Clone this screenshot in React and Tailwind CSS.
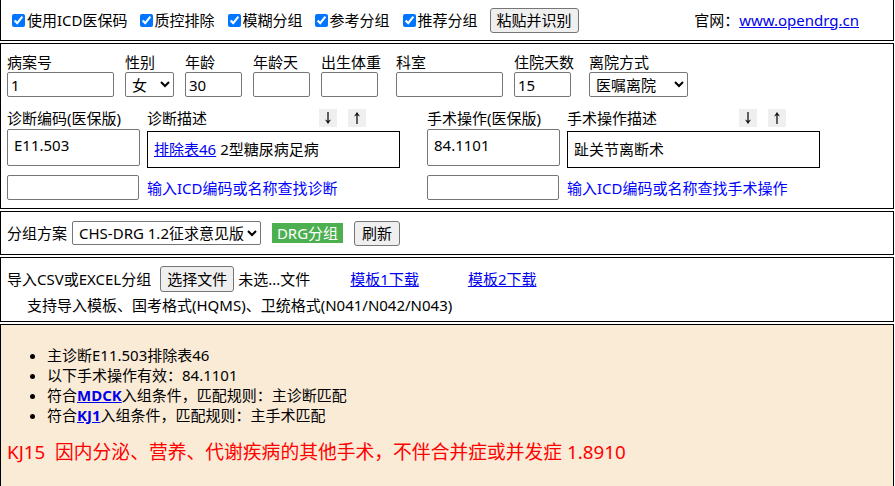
import React from "react";

function Check({ label, className = "" }) {
  return (
    <label className={"flex items-center " + className}>
      <input type="checkbox" defaultChecked className="w-[13px] h-[13px] mr-[2px] accent-[#0075ff]" />
      <span>{label}</span>
    </label>
  );
}

function Field({ label, w, children }) {
  return (
    <div className="flex flex-col shrink-0" style={{ width: w }}>
      <div className="h-[20px] leading-[20px] whitespace-nowrap">{label}</div>
      {children}
    </div>
  );
}

const inputCls =
  "h-[25px] border border-[#767676] rounded-[2px] bg-white px-[3px] leading-[23px] outline-none";

function Arrow({ up }) {
  return (
    <div className="w-[18px] h-[18px] bg-[#efefef] flex items-center justify-center">
      <svg width="10" height="14" viewBox="0 0 10 14" className={up ? "rotate-180" : ""}>
        <line x1="5" y1="1" x2="5" y2="11" stroke="#111" strokeWidth="1.3" />
        <path d="M2 8.5 L5 13 L8 8.5 L5 10 Z" fill="#111" />
      </svg>
    </div>
  );
}

function CodeGroup({ codeLabel, descLabel, code, desc, search }) {
  return (
    <div className="w-[420px] shrink-0 flex flex-col">
      <div className="flex">
        <div className="w-[140px] flex flex-col">
          <div className="h-[20px] leading-[20px] whitespace-nowrap">{codeLabel}</div>
          <div className="mt-[1px] w-[133px] h-[37px] border border-[#767676] rounded-[2px] bg-white pl-[6px] pt-[5px] leading-[20px]">
            {code}
          </div>
        </div>
        <div className="w-[253px] flex flex-col">
          <div className="h-[20px] flex items-center relative">
            <span className="leading-[20px]">{descLabel}</span>
            <div className="flex ml-auto mr-[34px] gap-[11px]">
              <Arrow />
              <Arrow up />
            </div>
          </div>
          <div className="mt-[3px] w-[253px] h-[37px] border border-black flex items-center pl-[6px]">
            {desc}
          </div>
        </div>
      </div>
      <div className="flex items-center mt-[7px]">
        <div className="w-[132px] h-[25px] border border-[#767676] rounded-[2px] bg-white" />
        <span className="ml-[8px] text-[#0000ff] leading-[20px]">{search}</span>
      </div>
    </div>
  );
}

export default function App() {
  return (
    <div className="w-[894px] text-[15px] text-black bg-white font-['Segoe_UI','Noto_Sans','Noto_Sans_CJK_SC',sans-serif]">
      {/* top bar */}
      <div className="h-[41px] border-x border-b border-black flex items-center pl-[11px]">
        <Check label="使用ICD医保码" />
        <Check label="质控排除" className="ml-[12px]" />
        <Check label="模糊分组" className="ml-[13px]" />
        <Check label="参考分组" className="ml-[12px]" />
        <Check label="推荐分组" className="ml-[13px]" />
        <button className="ml-[12px] h-[25px] px-[6px] border border-[#767676] rounded-[3px] bg-[#efefef] leading-[23px]">
          粘贴并识别
        </button>
        <div className="ml-auto mr-[34px]">
          官网：<a href="#" className="text-[#0000ee] underline">www.opendrg.cn</a>
        </div>
      </div>

      {/* patient info */}
      <div className="mt-[2px] h-[166px] border border-black pl-[6px] pt-[8px]">
        <div className="flex">
          <Field label="病案号" w={118}>
            <input className={inputCls + " w-[107px]"} defaultValue="1" />
          </Field>
          <Field label="性别" w={60}>
            <select className="w-[49px] h-[25px] border border-[#767676] rounded-[2px] bg-white pl-[2px]" defaultValue="女">
              <option>男</option>
              <option>女</option>
            </select>
          </Field>
          <Field label="年龄" w={68}>
            <input className={inputCls + " w-[57px]"} defaultValue="30" />
          </Field>
          <Field label="年龄天" w={68}>
            <input className={inputCls + " w-[57px]"} />
          </Field>
          <Field label="出生体重" w={75}>
            <input className={inputCls + " w-[57px]"} />
          </Field>
          <Field label="科室" w={118}>
            <input className={inputCls + " w-[107px]"} />
          </Field>
          <Field label="住院天数" w={75}>
            <input className={inputCls + " w-[57px]"} defaultValue="15" />
          </Field>
          <Field label="离院方式" w={120}>
            <select className="w-[99px] h-[25px] border border-[#767676] rounded-[2px] bg-white pl-[2px]" defaultValue="医嘱离院">
              <option>医嘱离院</option>
              <option>医嘱转院</option>
            </select>
          </Field>
        </div>
        <div className="flex mt-[11px]">
          <CodeGroup
            codeLabel="诊断编码(医保版)"
            descLabel="诊断描述"
            code="E11.503"
            desc={
              <>
                <a href="#" className="text-[#0000ee] underline">排除表46</a>
                <span className="ml-[4px]">2型糖尿病足病</span>
              </>
            }
            search="输入ICD编码或名称查找诊断"
          />
          <CodeGroup
            codeLabel="手术操作(医保版)"
            descLabel="手术操作描述"
            code="84.1101"
            desc={<span>趾关节离断术</span>}
            search="输入ICD编码或名称查找手术操作"
          />
        </div>
      </div>

      {/* group scheme */}
      <div className="mt-[2px] h-[44px] border border-black pl-[6px] flex items-center">
        <span>分组方案</span>
        <select className="ml-[5px] w-[189px] h-[24px] border border-[#767676] rounded-[2px] bg-white pl-[2px]" defaultValue="a">
          <option value="a">CHS-DRG 1.2征求意见版</option>
        </select>
        <div className="ml-[11px] w-[71px] h-[20px] bg-[#4caf50] text-white flex items-center justify-center leading-none">
          DRG分组
        </div>
        <button className="ml-[11px] h-[25px] w-[46px] border border-[#767676] rounded-[3px] bg-[#efefef] leading-[23px]">
          刷新
        </button>
      </div>

      {/* import */}
      <div className="mt-[2px] h-[65px] border border-black pl-[6px] pt-[8px]">
        <div className="flex items-center h-[26px]">
          <span>导入CSV或EXCEL分组</span>
          <button className="ml-[9px] h-[26px] w-[74px] border border-[#767676] rounded-[3px] bg-[#efefef] leading-[24px]">
            选择文件
          </button>
          <span className="ml-[4px]">未选...文件</span>
          <a href="#" className="ml-[40px] text-[#0000ee] underline">模板1下载</a>
          <a href="#" className="ml-[49px] text-[#0000ee] underline">模板2下载</a>
        </div>
        <div className="pl-[20px] leading-[20px] mt-[3px]">支持导入模板、国考格式(HQMS)、卫统格式(N041/N042/N043)</div>
      </div>

      {/* result */}
      <div className="mt-[2px] h-[200px] border border-black bg-[#faebd7] pl-[6px] pt-[20px]">
        <ul className="list-disc pl-[40px] leading-[20px]">
          <li>主诊断E11.503排除表46</li>
          <li>以下手术操作有效：84.1101</li>
          <li>
            符合<a href="#" className="text-[#0000ee] underline font-bold">MDCK</a>入组条件，匹配规则：主诊断匹配
          </li>
          <li>
            符合<a href="#" className="text-[#0000ee] underline font-bold">KJ1</a>入组条件，匹配规则：主手术匹配
          </li>
        </ul>
        <div className="mt-[15px] text-[18.8px] leading-[24px] text-[#ff0000] whitespace-pre">
          KJ15  因内分泌、营养、代谢疾病的其他手术，不伴合并症或并发症 1.8910
        </div>
      </div>
    </div>
  );
}
